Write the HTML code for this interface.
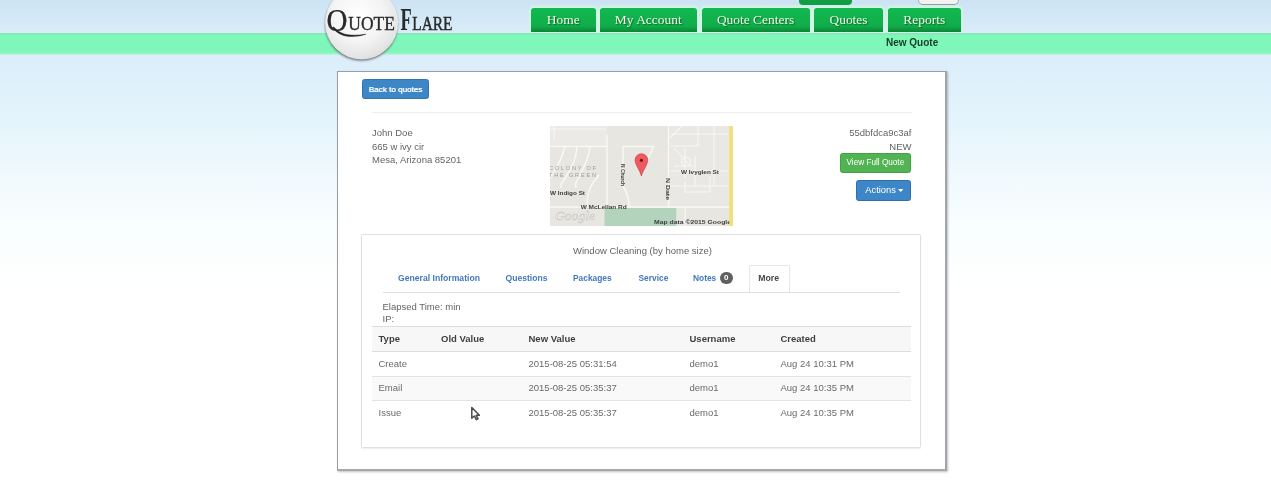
<!DOCTYPE html>
<html><head><meta charset="utf-8">
<style>
*{margin:0;padding:0;box-sizing:border-box}
html,body{width:1271px;height:485px;overflow:hidden}
body{position:relative;font-family:"Liberation Sans",sans-serif;color:#555;
background:linear-gradient(to bottom,#cde3f3 0px,#d3e9f7 20px,#d9edf9 32px,#dcedfb 55px,#dff1fb 90px,#e6f5fc 130px,#f0f9fd 175px,#f9fefe 225px,#ffffff 290px);}
.abs{position:absolute}
.band{position:absolute;left:0;top:32.5px;width:1271px;height:22px;background:linear-gradient(to bottom,#8fe0bd 0px,#80f0b9 1.5px,#7ff8b9 3px,#80f6ba 19px,#a8f3cf 21px,#cdf1e4 22px)}
.tab{position:absolute;top:8px;height:24px;border-radius:3px 3px 0 0;
background:linear-gradient(to bottom,#12b850 0px,#10ad4a 18px,#0d9a3f 21px,#0b8436 24px);box-shadow:0 -0.5px 0 2px rgba(208,248,224,.85);
font-family:"Liberation Serif",serif;font-size:13.45px;color:#f4f8e8;text-align:center;line-height:23px;
text-shadow:1px 1px 1px rgba(0,50,10,.55)}
.sans{font-family:"Liberation Sans",sans-serif}
.txt{position:absolute;white-space:nowrap;font-size:9.5px;line-height:11px;color:#646464}
.btn{position:absolute;border-radius:3px;color:#fff;font-size:8.2px;text-align:center;white-space:nowrap}
.tabs a{position:absolute;white-space:nowrap;font-weight:bold;font-size:8.4px;color:#4279bd;line-height:10px}
.th{position:absolute;white-space:nowrap;font-weight:bold;font-size:9.5px;color:#3f3f3f;line-height:11px}
.td{position:absolute;white-space:nowrap;font-size:9.5px;color:#6a6a6a;line-height:11px}
</style></head><body>
<div id="wrap" style="position:absolute;left:0;top:0;width:1271px;height:485px;filter:blur(0.3px)">

<!-- top small buttons -->
<div class="abs" style="left:799px;top:-6px;width:53px;height:11px;border-radius:0 0 4px 4px;background:#119e45"></div>
<div class="abs" style="left:918px;top:-6px;width:41px;height:10.5px;border-radius:0 0 5px 5px;background:#f2f2f2;border:1px solid #aab;border-bottom:1.5px solid #999"></div>

<!-- nav tabs -->
<div class="tab" id="t_home" style="left:531px;width:64.5px">Home</div>
<div class="tab" id="t_acc" style="left:599.5px;width:97.5px">My Account</div>
<div class="tab" id="t_qc" style="left:701.5px;width:108px">Quote Centers</div>
<div class="tab" id="t_q" style="left:814px;width:69px">Quotes</div>
<div class="tab" id="t_r" style="left:888px;width:72.5px">Reports</div>

<div class="band"></div>
<div class="abs sans" id="newq" style="left:886px;top:36.6px;font-size:10px;font-weight:bold;color:#18402a;white-space:nowrap;line-height:11px">New Quote</div>

<!-- logo -->
<svg class="abs" style="left:300px;top:0px" width="180" height="70" viewBox="300 0 180 70">
<defs>
<radialGradient id="ball" cx="0.45" cy="0.4" r="0.65">
<stop offset="0" stop-color="#ffffff"/><stop offset="0.55" stop-color="#f4f4f4"/><stop offset="0.88" stop-color="#e4e4e4"/><stop offset="1" stop-color="#d0d0d0"/>
</radialGradient>
<filter id="sh" x="-20%" y="-20%" width="140%" height="140%"><feGaussianBlur stdDeviation="0.9"/></filter>
<filter id="lb" x="-5%" y="-5%" width="110%" height="110%"><feGaussianBlur stdDeviation="0.3"/></filter>
</defs>
<circle cx="361.4" cy="24.4" r="36.3" fill="#5f5f5f" filter="url(#sh)" opacity="0.85"/>
<circle cx="361.6" cy="22.9" r="36" fill="url(#ball)" stroke="#f2f2f2" stroke-width="0.8"/>

<g font-family="Liberation Serif" fill="#2a2a2a" filter="url(#lb)">
<text x="326.6" y="30.6" font-size="30.5" textLength="21" lengthAdjust="spacingAndGlyphs" stroke="#2a2a2a" stroke-width="0.25">O</text>
<path d="M332.5 27.5C336 32.5 342 36.2 350 36.4C356 36.6 361 35.8 365.8 34.2C361 35.0 356 35.3 351 35.1C344 34.8 338 32 333.8 27Z" fill="#222" stroke="#222" stroke-width="0.5"/>
<text x="348.3" y="30.4" font-size="18.6" textLength="46.5" lengthAdjust="spacingAndGlyphs" stroke="#2a2a2a" stroke-width="0.35">UOTE</text>
<text x="400.6" y="30.4" font-size="30.5" font-weight="bold" textLength="11.2" lengthAdjust="spacingAndGlyphs">F</text>
<text x="412.3" y="30.4" font-size="18.6" textLength="40.2" lengthAdjust="spacingAndGlyphs" stroke="#2a2a2a" stroke-width="0.45">LARE</text>
</g>
</svg>

<!-- card -->
<div class="abs" style="left:337px;top:71px;width:610px;height:400px;background:#fff;border:1px solid #9c9ea6;border-right:2.5px solid #a2a4ac;border-bottom:2.5px solid #a8a8a8;box-shadow:1px 1px 2px rgba(0,0,0,.25)"></div>

<div class="btn" id="back" style="left:362px;top:79px;width:67px;height:20px;border-radius:2.5px;background:#3e87c7;border:1px solid #3375b2;line-height:19.2px;font-size:8.1px;text-shadow:0 0 .4px #fff">Back to quotes</div>
<div class="abs" style="left:372px;top:112px;width:540px;height:1px;background:#eee"></div>

<div class="txt" id="addr1" style="left:372px;top:127.3px">John Doe</div>
<div class="txt" style="left:372px;top:140.8px">665 w ivy cir</div>
<div class="txt" id="addr3" style="left:372px;top:153.9px">Mesa, Arizona 85201</div>

<!-- map -->
<svg class="abs" style="left:550px;top:126px" width="183" height="100" viewBox="0 0 183 100">
<defs><filter id="mb" x="-5%" y="-5%" width="110%" height="110%"><feGaussianBlur stdDeviation="0.35"/></filter></defs>
<g filter="url(#mb)">
<rect width="183" height="100" fill="#e8e6e1"/>
<rect x="0" y="0" width="57" height="20" fill="#ebeae6"/>
<rect x="120" y="0" width="60" height="81" fill="#eae8e4"/>
<g stroke="#f9f8f5" stroke-width="1.5" fill="none">
<path d="M0 20.5H57M57 9V81"/>
<path d="M0 81H183"/>
<path d="M118.5 0V81M135 81V100"/>
<path d="M73 60V20.5H103.5L95 39"/>
<path d="M73 40V60C77 66 79 72 79 81"/>
<path d="M14.7 20.5C13 30 8 40 0 52M27 20.5C26 35 20 45 11 58V62M40 20.5C39 35 30 48 25.6 58V62"/>
<path d="M49 49C42 57 37 64 37 81"/>
</g>
<g stroke="#f7f6f2" stroke-width="1.1" fill="none">
<path d="M0 3H57M4 0V14M120 12L132 0M120 8H178M120 20H148M148 0V20M124 22L140 40M124 40H145M135 22V52M145 30V60M120 60H178M164 0V60M120 45H178M135 55V66M160 50V66M135 66H160M136 31A4.5 4.5 0 1 0 136.1 31"/>
</g>
<rect x="54.5" y="82" width="72" height="18" fill="#b4d3bd"/>
<rect x="126.5" y="82" width="8" height="18" fill="#e9e7e2"/>
<g font-family="Liberation Sans" fill="#9a9a98" font-size="5.6">
<text x="-1" y="44" textLength="47" lengthAdjust="spacing">COLONY OF</text>
<text x="-1" y="51.3" textLength="47" lengthAdjust="spacing">THE GREEN</text>
</g>
<g font-family="Liberation Sans" fill="#3e3e3e" font-size="5.6" font-weight="bold">
<text x="0" y="69.3" textLength="35" lengthAdjust="spacingAndGlyphs">W Indigo St</text>
<text x="30.7" y="83" textLength="46" lengthAdjust="spacingAndGlyphs">W McLellan Rd</text>
<text x="131" y="48" textLength="38" lengthAdjust="spacingAndGlyphs">W Ivyglen St</text>
<text x="104" y="98.3" font-size="5.8" textLength="77" lengthAdjust="spacingAndGlyphs">Map data ©2015 Google</text>
<text transform="translate(71,38) rotate(90)" textLength="22" lengthAdjust="spacingAndGlyphs">N Church</text>
<text transform="translate(116,52) rotate(90)" textLength="22" lengthAdjust="spacingAndGlyphs">N Date</text>
</g>
<text x="5" y="94" font-family="Liberation Serif" font-style="italic" font-size="12" fill="#f3f3f3" stroke="#c4c4c4" stroke-width=".45" textLength="40" lengthAdjust="spacingAndGlyphs">Google</text>
<rect x="179.3" y="0" width="3.7" height="100" fill="#f3df78"/>
<g transform="translate(91.4,27.5)">
<path d="M0 22.5C-1.8 16 -6.3 11.5 -6.3 6.5A6.3 6.3 0 0 1 6.3 6.5C6.3 11.5 1.8 16 0 22.5Z" fill="#ee5a5e" stroke="#c9393d" stroke-width=".6"/>
<circle cx="0" cy="6.8" r="1.6" fill="#6e1214"/>
</g>
</g>
</svg>

<!-- right side -->
<div class="txt" id="qid" style="right:359.5px;top:127px">55dbfdca9c3af</div>
<div class="txt" id="new" style="right:359.5px;top:140.5px">NEW</div>
<div class="btn" id="vfq" style="left:839.7px;top:153.3px;width:71.4px;height:19.4px;border-radius:2.5px;background:#52b352;border:1px solid #44a044;line-height:17.4px">View Full Quote</div>
<div class="btn" id="act" style="left:856px;top:180px;width:54.9px;height:21.2px;border-radius:2.5px;background:#3d86c7;border:1px solid #2f6fae;line-height:19.2px;font-size:9.3px;text-align:left;padding-left:8.3px">Actions<svg style="position:absolute;left:40.5px;top:8.4px" width="6" height="4" viewBox="0 0 6 4"><path d="M0 0H5.4L2.7 3Z" fill="#fff"/></svg></div>

<!-- panel -->
<div class="abs" style="left:361px;top:233.5px;width:559.5px;height:214px;border:1px solid #e0e0e0;border-radius:1.5px;box-shadow:0 1px 1.5px rgba(0,0,0,.07)"></div>
<div class="txt" id="wc" style="left:573px;top:245px">Window Cleaning (by home size)</div>

<div class="tabs">
<a id="tb1" style="left:398px;top:273px;font-size:8.65px">General Information</a>
<a style="left:505.5px;top:273px;font-size:8.6px">Questions</a>
<a style="left:573px;top:273px">Packages</a>
<a style="left:638.5px;top:273px">Service</a>
<a style="left:693px;top:273px">Notes</a>
</div>
<div class="abs" style="left:719.5px;top:272px;width:13.5px;height:11.5px;border-radius:6px;background:#5f5f5f;color:#fff;font-size:8px;font-weight:bold;text-align:center;line-height:11.5px">0</div>
<div class="abs" style="left:748.5px;top:265px;width:41px;height:27px;border:1px solid #e6e6e6;border-bottom:none;border-radius:2px 2px 0 0;background:#fff"></div>
<div class="abs" style="left:383px;top:291.5px;width:517px;height:1.2px;background:#dedede"></div>
<div class="abs" id="more" style="left:758.3px;top:272.6px;font-size:8.7px;font-weight:bold;color:#474747;line-height:10px">More</div>

<div class="txt" id="el" style="left:382.5px;top:301px">Elapsed Time: min</div>
<div class="txt" style="left:382.5px;top:313.4px">IP:</div>

<!-- table -->
<div class="abs" style="left:372px;top:326px;width:538.8px;height:25.5px;background:#f7f7f7;border-top:1px solid #ddd;border-bottom:1.5px solid #ddd"></div>
<div class="abs" style="left:372px;top:376px;width:538.8px;height:25px;background:#f9f9f9;border-top:1px solid #e3e3e3;border-bottom:1px solid #e3e3e3"></div>
<div class="th" id="th1" style="left:378.5px;top:333.3px">Type</div>
<div class="th" style="left:441px;top:333.3px">Old Value</div>
<div class="th" style="left:528.5px;top:333.3px">New Value</div>
<div class="th" style="left:689.5px;top:333.3px">Username</div>
<div class="th" style="left:780.5px;top:333.3px">Created</div>

<div class="td" id="r1" style="left:378.5px;top:357.6px">Create</div>
<div class="td" style="left:528.5px;top:357.6px">2015-08-25 05:31:54</div>
<div class="td" style="left:689.5px;top:357.6px">demo1</div>
<div class="td" style="left:780.5px;top:357.6px">Aug 24 10:31 PM</div>

<div class="td" style="left:378.5px;top:382.2px">Email</div>
<div class="td" style="left:528.5px;top:382.2px">2015-08-25 05:35:37</div>
<div class="td" style="left:689.5px;top:382.2px">demo1</div>
<div class="td" style="left:780.5px;top:382.2px">Aug 24 10:35 PM</div>

<div class="td" style="left:378.5px;top:406.6px">Issue</div>
<div class="td" style="left:528.5px;top:406.6px">2015-08-25 05:35:37</div>
<div class="td" style="left:689.5px;top:406.6px">demo1</div>
<div class="td" style="left:780.5px;top:406.6px">Aug 24 10:35 PM</div>

<!-- cursor -->
<svg class="abs" style="left:469px;top:405px" width="14" height="17" viewBox="0 0 14 17">
<path d="M2.8 2.5V13.2L5.4 11L7.3 14.6L9 13.8L7.2 10.3H10.4Z" fill="#fff" stroke="#4a4a4a" stroke-width="1.5" stroke-linejoin="round"/>
</svg>

</div>
</body></html>
